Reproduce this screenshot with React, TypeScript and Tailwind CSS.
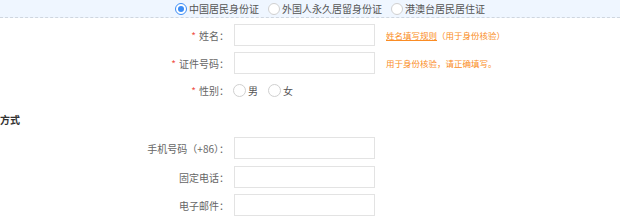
import React, { useState } from 'react';

const font = { fontFamily: '"Microsoft YaHei", "Noto Sans CJK SC", sans-serif' };

const Radio = ({ checked, size = 'w-[12px] h-[12px]' }: { checked?: boolean; size?: string }) => (
  <span
    className={`${size} rounded-full border flex items-center justify-center bg-white shrink-0 ${
      checked ? 'border-[#3b8cf5]' : 'border-[#d0d0d0]'
    }`}
  >
    {checked && <span className="w-[6px] h-[6px] rounded-full bg-[#3b8cf5]" />}
  </span>
);

const Row = ({
  label,
  required,
  hint,
  className = '',
}: {
  label: string;
  required?: boolean;
  hint?: React.ReactNode;
  className?: string;
}) => (
  <div className={`flex items-center h-[22px] ${className}`}>
    <div className="w-[229px] text-right text-[10px] text-[#666] pr-0">
      {required && <span className="text-[#f0524b] mr-[3px]">*</span>}
      {label}
    </div>
    <input className="ml-[5px] w-[141px] h-[22px] border border-[#e3e3e3] bg-white outline-none" />
    {hint && <div className="ml-[11px] text-[8.5px] text-[#fa8c24]">{hint}</div>}
  </div>
);

export default function App() {
  const [idType, setIdType] = useState(0);
  const types = ['中国居民身份证', '外国人永久居留身份证', '港澳台居民居住证'];

  return (
    <div className="w-[620px] h-[217px] bg-white overflow-hidden" style={font}>
      {/* id type selector */}
      <div className="h-[18px] bg-[#eff6ff] border-b border-dashed border-[#cfd6df] flex items-center pl-[175px]">
        {types.map((t, i) => (
          <label
            key={t}
            onClick={() => setIdType(i)}
            className="flex items-center mr-[9px] text-[10px] text-[#555] cursor-pointer"
          >
            <Radio checked={idType === i} />
            <span className="ml-[2px]">{t}</span>
          </label>
        ))}
      </div>

      <Row
        className="mt-[6px]"
        label="姓名："
        required
        hint={
          <>
            <span className="underline">姓名填写规则</span>
            <span>（用于身份核验）</span>
          </>
        }
      />
      <Row className="mt-[6px]" label="证件号码：" required hint="用于身份核验，请正确填写。" />

      <div className="flex items-center h-[22px] mt-[5px]">
        <div className="w-[229px] text-right text-[10px] text-[#666]">
          <span className="text-[#f0524b] mr-[3px]">*</span>性别：
        </div>
        <label className="ml-[4px] flex items-center text-[10px] text-[#555]">
          <Radio size="w-[13px] h-[13px]" />
          <span className="ml-[2px]">男</span>
        </label>
        <label className="ml-[10px] flex items-center text-[10px] text-[#555]">
          <Radio size="w-[13px] h-[13px]" />
          <span className="ml-[2px]">女</span>
        </label>
      </div>

      <div className="mt-[12px] text-[10px] font-bold text-[#333] leading-[14px]">方式</div>

      <Row className="mt-[10px]" label="手机号码（+86）：" />
      <Row className="mt-[7px]" label="固定电话：" />
      <Row className="mt-[6px]" label="电子邮件：" />
    </div>
  );
}
